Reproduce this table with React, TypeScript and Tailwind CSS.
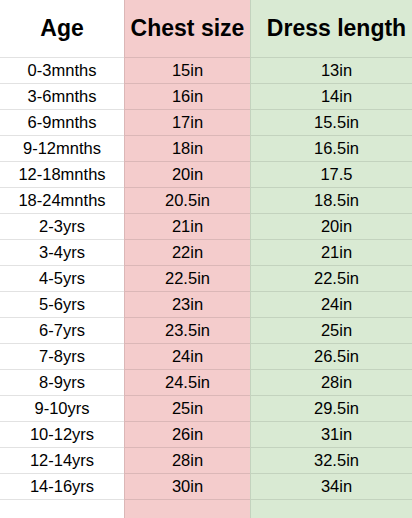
const rows: [string, string, string][] = [
  ["0-3mnths", "15in", "13in"],
  ["3-6mnths", "16in", "14in"],
  ["6-9mnths", "17in", "15.5in"],
  ["9-12mnths", "18in", "16.5in"],
  ["12-18mnths", "20in", "17.5"],
  ["18-24mnths", "20.5in", "18.5in"],
  ["2-3yrs", "21in", "20in"],
  ["3-4yrs", "22in", "21in"],
  ["4-5yrs", "22.5in", "22.5in"],
  ["5-6yrs", "23in", "24in"],
  ["6-7yrs", "23.5in", "25in"],
  ["7-8yrs", "24in", "26.5in"],
  ["8-9yrs", "24.5in", "28in"],
  ["9-10yrs", "25in", "29.5in"],
  ["10-12yrs", "26in", "31in"],
  ["12-14yrs", "28in", "32.5in"],
  ["14-16yrs", "30in", "34in"],
]

// third column runs past the right edge of the window
const cols = "grid grid-cols-[124px_126px_172px]"

export default function App() {
  return (
    <div className="flex h-[518px] w-[412px] flex-col overflow-hidden bg-white font-['Liberation_Sans',Arial,sans-serif] text-black">
      {/* header */}
      <div className={cols}>
        <div className="flex h-[58px] items-center justify-center border-b border-[#e2e2e2] text-[23px] font-bold">
          Age
        </div>
        <div className="flex h-[58px] items-center justify-center border-b border-l border-[#dbb7b7] bg-[#f4cccc] text-[23px] font-bold">
          Chest size
        </div>
        <div className="flex h-[58px] items-center justify-center border-b border-l border-[#c3d3be] bg-[#d9ead3] text-[23px] font-bold">
          Dress length
        </div>
      </div>

      {rows.map(([age, chest, dress]) => (
        <div key={age} className={cols}>
          <div className="flex h-[26px] items-center justify-center border-b border-[#e2e2e2] text-[16.5px]">
            {age}
          </div>
          <div className="flex h-[26px] items-center justify-center border-b border-l border-[#dbb7b7] bg-[#f4cccc] text-[16.5px]">
            {chest}
          </div>
          <div className="flex h-[26px] items-center justify-center border-b border-l border-[#c3d3be] bg-[#d9ead3] text-[16.5px]">
            {dress}
          </div>
        </div>
      ))}

      {/* empty row below */}
      <div className={cols + " flex-1"}>
        <div />
        <div className="border-l border-[#dbb7b7] bg-[#f4cccc]" />
        <div className="border-l border-[#c3d3be] bg-[#d9ead3]" />
      </div>
    </div>
  )
}
